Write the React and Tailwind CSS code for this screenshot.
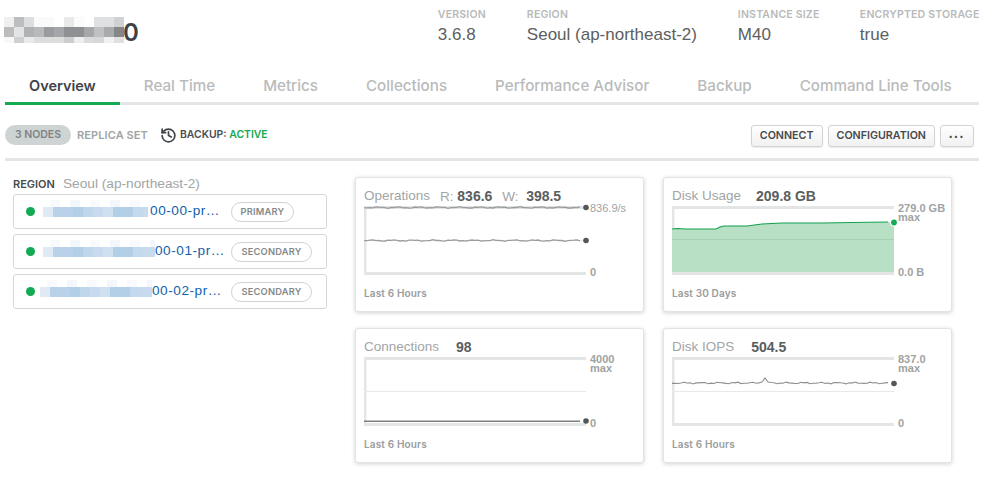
import React from "react";
import { History } from "lucide-react";

const UI = "font-['Inter','Liberation_Sans',sans-serif]";
const HV = "font-['Liberation_Sans','Arial',sans-serif]";

const titleMosaic = [
  ["#f0f0f1","#bcbec0","#dcdedf","#fafafa","#fafafa","#ffffff","#e8e9e9","#fbfbfb","#ffffff","#dfe0e1","#dfe0e1","#d0d1d3"],
  ["#bbbcbe","#e3e4e5","#b0b1b3","#b8b9bb","#9a9b9e","#a5a6a9","#8f9093","#8f9093","#a6a7a9","#bfc0c2","#a9aaac","#85868a"],
  ["#f8f8f8","#cfd0d1","#eaeaeb","#dcdddd","#dcdddd","#dcdddd","#cccdce","#eeeeee","#dadbdb","#d6d7d7","#f0f0f0","#e0e0e0"],
];

function TitleMosaic() {
  return (
    <svg width="120" height="26" className="block shrink-0">
      {titleMosaic.map((row, r) =>
        row.map((c, i) => <rect key={r + "-" + i} x={i * 10} y={r * 10} width="10" height={r === 2 ? 6 : 10} fill={c} />)
      )}
    </svg>
  );
}

const blue = ["#dfeaf5","#b9d2e9","#b9d2e9","#b3cee7","#c0d6eb","#c8dbee","#cfe0f0","#b3cee7","#b3cee7","#c4d9ed","#c8dbee","#c8dbee"];
function HostMosaic({ width, offset }) {
  return (
    <svg width={width} height="17" className={`block shrink-0 relative z-10 -mt-[6px] ${offset}`}>
      {[0, 1, 2, 3, 4, 5].map((i) => (
        <rect key={i} x={7 + i * 20} y="0" width="10" height="7" fill={i % 2 ? "#f3f7fb" : "#f8fafd"} />
      ))}
      {blue.map((c, i) => <rect key={i} x={i * 10} y="7" width="10" height="10" fill={c} />)}
    </svg>
  );
}

function Meta({ label, value, className }) {
  return (
    <div className={className}>
      <div className={`${UI} text-[10.5px] leading-[12px] font-semibold tracking-[0.2px] text-[#b8baba] whitespace-nowrap`}>{label}</div>
      <div className={`${HV} mt-[3px] text-[17px] leading-[22px] text-[#5c6060] whitespace-nowrap`}>{value}</div>
    </div>
  );
}

const tabs = ["Real Time", "Metrics", "Collections", "Performance Advisor", "Backup", "Command Line Tools"];

function Host({ num, role, width, offset, pill }) {
  return (
    <div className="h-[35px] border border-[#d5d8d8] rounded-[3px] flex items-center pl-[12px]">
      <span className="w-[9px] h-[9px] rounded-full bg-[#13aa52] shrink-0" />
      <div className="w-[196px] shrink-0 flex items-center pr-[11px]">
        <HostMosaic width={width} offset={offset} />
        <span className={`${HV} ml-auto text-[13.6px] tracking-[0.55px] text-[#0f62ad] whitespace-nowrap`}>{num}-pr…</span>
      </div>
      <span className={`${UI} ${pill} h-[20px] rounded-full border border-[#d0d3d3] flex items-center justify-center text-[9.3px] font-semibold tracking-[0.2px] text-[#85898a]`}>{role}</span>
    </div>
  );
}

function wave(w, base, amp, seed) {
  const p = [];
  for (let x = 0; x <= w; x += 3) {
    const y = base + amp * (Math.sin(x * 0.31 + seed) * 0.6 + Math.sin(x * 0.83 + seed * 2) * 0.4);
    p.push(`${x},${y.toFixed(1)}`);
  }
  return p.join(" ");
}

function Frame({ children, grid = true, gridY = 34 }) {
  return (
    <svg width="222" height="69" className="block shrink-0 overflow-visible">
      <rect x="0" y="0" width="222" height="3" fill="#e4e6e6" />
      <rect x="0" y="0" width="2.5" height="69" fill="#e4e6e6" />
      <rect x="0" y="66" width="222" height="3" fill="#e4e6e6" />
      {grid && <rect x="0" y={gridY} width="222" height="1" fill="#e8eaea" />}
      {children}
    </svg>
  );
}

function Card({ title, stats, axisTop, axisMax, axisBottom, range, plot }) {
  return (
    <div className="bg-white border border-[#e2e4e4] rounded-[3px] shadow-[0_1px_4px_rgba(0,0,0,0.18)] pl-[8px] pt-[9px] h-[135px]">
      <div className={`${HV} h-[18px] flex items-center text-[13.5px] leading-[18px] whitespace-nowrap`}>
        <span className="text-[#a1a5a5]">{title}</span>
        {stats}
      </div>
      <div className="mt-[1px] flex gap-[4px]">
        {plot}
        <div className={`${HV} h-[69px] flex flex-col justify-between text-[11px] font-semibold text-[#a0a3a3] whitespace-nowrap`}>
          <div className="-mt-[2px]">
            <div className="leading-[9px]">{axisTop}</div>
            {axisMax && <div className="leading-[8px]">max</div>}
          </div>
          <div className="leading-[13px] -mb-[4px]">{axisBottom}</div>
        </div>
      </div>
      <div className={`${UI} mt-[11px] text-[10px] leading-[14px] font-semibold tracking-[0.15px] text-[#999d9d]`}>{range}</div>
    </div>
  );
}

const B = ({ children, className = "" }) => <b className={`text-[14px] font-bold text-[#5a5e5e] ${className}`}>{children}</b>;

function spikeLine() {
  const p = [];
  for (let x = 0; x <= 216; x += 3) {
    let y = 26 + 0.9 * (Math.sin(x * 0.37) * 0.6 + Math.sin(x * 0.91 + 1) * 0.5);
    if (x === 93) y = 21;
    if (x === 90 || x === 96) y = 25;
    p.push(`${x},${y.toFixed(1)}`);
  }
  return p.join(" ");
}

export default function App() {
  return (
    <div className={`${UI} w-[987px] h-[479px] bg-white overflow-hidden pl-[5px] pr-[8px]`}>
      <header className="h-[68px] flex">
        <div className="flex items-start pt-[17px] -ml-[1px]">
          <TitleMosaic />
          <span className={`${UI} -ml-[1px] text-[24px] leading-[30px] mt-[1px] font-semibold text-[#3d4145]`}>0</span>
        </div>
        <div className="flex pt-[9px] ml-[299px]">
          <Meta label="VERSION" value="3.6.8" className="w-[89px]" />
          <Meta label="REGION" value="Seoul (ap-northeast-2)" className="w-[211px]" />
          <Meta label="INSTANCE SIZE" value="M40" className="w-[122px]" />
          <Meta label="ENCRYPTED STORAGE" value="true" />
        </div>
      </header>

      <nav className="h-[37px] flex border-b-[3px] border-[#e4e6e6] text-[15.2px] font-medium leading-[36px] whitespace-nowrap">
        <div className="-mb-[3px] h-[37px] border-b-[3px] border-[#13aa52] px-[24px] text-[14.5px] text-[#3f4448] font-semibold">Overview</div>
        {tabs.map((t) => (
          <div key={t} className="px-[24px] text-[#b9bbbb]">{t}</div>
        ))}
      </nav>

      <div className="h-[56px] pt-[20px] flex items-start border-b-[3px] border-[#e4e6e6]">
        <span className="h-[20px] w-[66px] rounded-full bg-[#ced3d3] flex items-center justify-center text-[10.5px] font-semibold text-[#7e8484] whitespace-nowrap">3 NODES</span>
        <span className="ml-[6px] h-[20px] flex items-center text-[11px] font-semibold tracking-[0.1px] text-[#a0a4a4] whitespace-nowrap">REPLICA SET</span>
        <span className="ml-[12px] h-[20px] flex items-center text-[10.4px] font-semibold text-[#4a4e50] whitespace-nowrap">
          <History size={17} strokeWidth={2.4} className="mr-[3px] text-[#3f4448]" />
          BACKUP:&nbsp;<span className="text-[#13aa52]">ACTIVE</span>
        </span>
        <div className="ml-auto flex gap-[5px] mr-[5px]">
          {["CONNECT", "CONFIGURATION"].map((b) => (
            <span key={b} className="h-[22px] px-[8px] pt-[1px] rounded-[3px] border border-[#d2d4d4] bg-gradient-to-b from-white to-[#f1f1f1] shadow-[0_1px_1px_rgba(0,0,0,0.08)] flex items-center text-[10.7px] font-semibold text-[#45494b] whitespace-nowrap">{b}</span>
          ))}
          <span className="h-[22px] w-[34px] rounded-[3px] border border-[#d2d4d4] bg-gradient-to-b from-white to-[#f1f1f1] shadow-[0_1px_1px_rgba(0,0,0,0.08)] flex items-center justify-center text-[7px] font-bold tracking-[2px] text-[#45494b] leading-none">•••</span>
        </div>
      </div>

      <main className="flex pt-[16px]">
        <section className="w-[314px] ml-[8px] shrink-0 -mt-[1px]">
          <div className="h-[17px] flex items-center whitespace-nowrap mb-[1px]">
            <span className="text-[11px] font-semibold text-[#474b4d]">REGION</span>
            <span className={`${HV} ml-[8px] text-[13.7px] text-[#a1a5a5]`}>Seoul (ap-northeast-2)</span>
          </div>
          <div className="flex flex-col gap-[5px]">
            <Host num="00-00" role="PRIMARY" width={105} offset="ml-[8px]" pill="w-[63px]" />
            <Host num="00-01" role="SECONDARY" width={112} offset="ml-[8px]" pill="w-[81px]" />
            <Host num="00-02" role="SECONDARY" width={112} offset="ml-[5px]" pill="w-[81px]" />
          </div>
        </section>

        <section className="ml-[28px] grid grid-cols-[289px_289px] gap-x-[19px] gap-y-[16px]">
          <Card
            title="Operations"
            stats={<span className="ml-[10px] text-[#a1a5a5]">R: <B>836.6</B><span className="ml-[10px]">W:&nbsp;&nbsp;</span><B>398.5</B></span>}
            axisTop={<span className="font-normal">836.9/s</span>}
            axisBottom="0"
            range="Last 6 Hours"
            plot={
              <Frame>
                <polyline points={wave(216, 1.5, 0.8, 0.4)} fill="none" stroke="#9a9d9d" strokeWidth="1.3" />
                <polyline points={wave(216, 34.5, 0.8, 2.1)} fill="none" stroke="#9a9d9d" strokeWidth="1.3" />
                <circle cx="222" cy="1.5" r="2.8" fill="#53575a" />
                <circle cx="222" cy="34.5" r="2.8" fill="#53575a" />
              </Frame>
            }
          />
          <Card
            title="Disk Usage"
            stats={<B className="ml-[15px]">209.8 GB</B>}
            axisTop="279.0 GB"
            axisMax
            axisBottom="0.0 B"
            range="Last 30 Days"
            plot={
              <Frame grid={false}>
                <polygon points="0,23 14,23 44,23 50,20 60,20 75,20 90,18 110,17 150,17 222,16 222,66 0,66" fill="#b7e0c4" />
                <rect x="0" y="33" width="222" height="1" fill="#a3d3b3" />
                <polyline points="0,23 5,22.5 14,23 44,23 48,21 52,20 60,20 75,20 90,18 100,17.5 110,17 150,17 180,16.5 216,16" fill="none" stroke="#13a050" strokeWidth="1.2" />
                <circle cx="222" cy="16.5" r="4" fill="#fff" />
                <circle cx="222" cy="16.5" r="2.9" fill="#13aa52" />
              </Frame>
            }
          />
          <Card
            title="Connections"
            stats={<B className="ml-[17px]">98</B>}
            axisTop="4000"
            axisMax
            axisBottom="0"
            range="Last 6 Hours"
            plot={
              <Frame>
                <rect x="0" y="63.5" width="216" height="1.5" fill="#7c8080" />
                <circle cx="222" cy="64" r="2.8" fill="#53575a" />
              </Frame>
            }
          />
          <Card
            title="Disk IOPS"
            stats={<B className="ml-[17px]">504.5</B>}
            axisTop="837.0"
            axisMax
            axisBottom="0"
            range="Last 6 Hours"
            plot={
              <Frame>
                <polyline points={spikeLine()} fill="none" stroke="#8d9090" strokeWidth="1.1" />
                <circle cx="222" cy="26.5" r="2.8" fill="#53575a" />
              </Frame>
            }
          />
        </section>
      </main>
    </div>
  );
}
